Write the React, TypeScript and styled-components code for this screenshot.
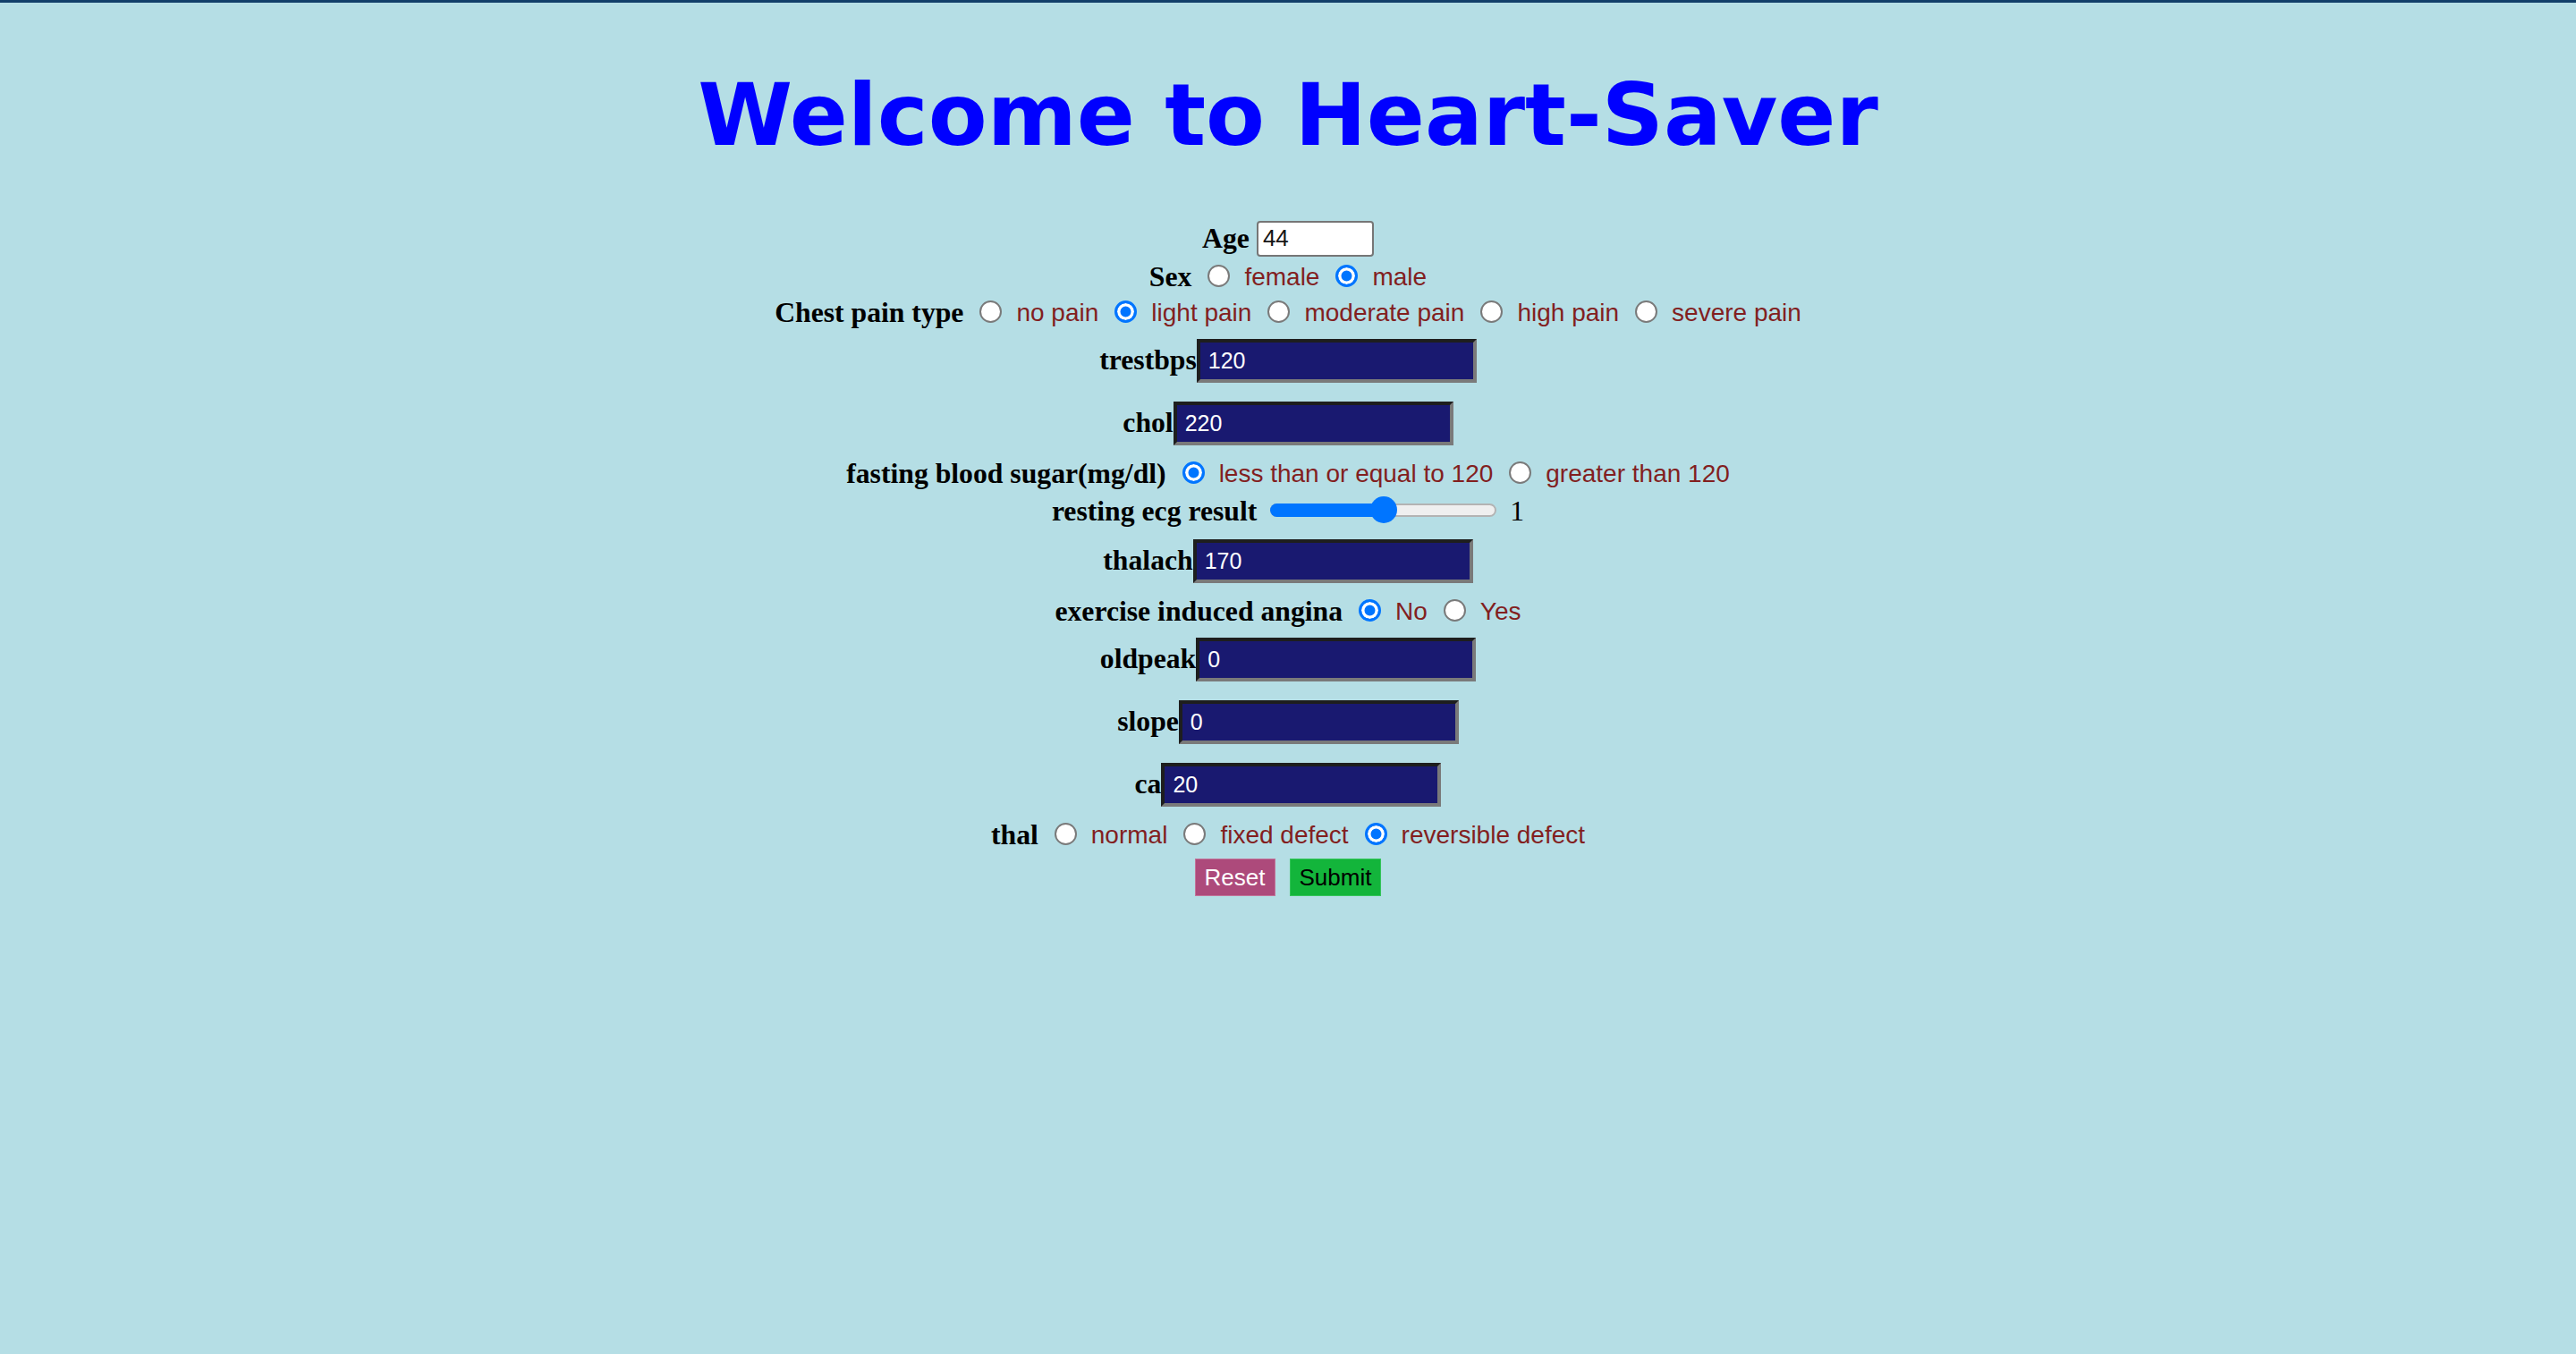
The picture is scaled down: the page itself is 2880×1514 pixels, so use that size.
import React from "react";
import styled, { createGlobalStyle } from "styled-components";

const GlobalStyle = createGlobalStyle`
  html, body {
    margin: 0;
    padding: 0;
    background: #b5dee5;
  }
  body {
    font-family: "Liberation Serif", "Times New Roman", serif;
  }
  * {
    box-sizing: border-box;
  }
`;

const Page = styled.div`
  min-height: 100vh;
  background: #b5dee5;
  border-top: 3px solid #123f6a;
`;

const Title = styled.h1`
  margin: 70px 0 0;
  font-family: "DejaVu Sans", Verdana, sans-serif;
  font-weight: 700;
  font-size: 96px;
  line-height: 112px;
  color: #0000ff;
  text-align: center;
`;

const Form = styled.form`
  display: flex;
  flex-direction: column;
  margin: 60px 0 0;
`;

const Row = styled.div<{ $h: number; $drop?: number }>`
  height: ${(p) => p.$h}px;
  padding-top: ${(p) => p.$drop ?? 0}px;
  display: flex;
  justify-content: center;
  align-items: center;
`;

const FieldLabel = styled.span<{ $gap?: number }>`
  font-family: "Liberation Serif", "Times New Roman", serif;
  font-weight: 700;
  font-size: 31.7px;
  line-height: 1;
  color: #000;
  white-space: pre;
  margin-right: ${(p) => p.$gap ?? 0}px;
`;

const Radio = styled.input.attrs({ type: "radio" })`
  appearance: none;
  -webkit-appearance: none;
  flex: none;
  width: 25px;
  height: 25px;
  margin: 0 16px 4px 18px;
  border-radius: 50%;
  border: 2px solid #7a7a7a;
  background: #fff;
  outline: none;

  &:checked {
    border: 3px solid #0075ff;
    background: #0075ff;
    box-shadow: inset 0 0 0 3.5px #fff;
  }
`;

const OptionText = styled.span`
  font-family: "Liberation Sans", Arial, sans-serif;
  font-size: 28px;
  line-height: 1;
  color: #821f1f;
  white-space: pre;
`;

const AgeInput = styled.input`
  width: 131px;
  height: 40px;
  margin: 0;
  padding: 0 5px;
  background: #fff;
  color: #151515;
  border: 2px solid #767676;
  border-radius: 4px;
  font-family: "Liberation Sans", Arial, sans-serif;
  font-size: 26px;
  outline: none;
`;

const DarkInput = styled.input`
  width: 313px;
  height: 49px;
  margin: 0;
  padding: 0 9px;
  background: #191970;
  color: #fff;
  border: 4px solid;
  border-color: #1e1e1e #7a7a7a #7a7a7a #1e1e1e;
  font-family: "Liberation Sans", Arial, sans-serif;
  font-size: 25px;
  outline: none;
`;

const SliderTrack = styled.div`
  position: relative;
  flex: none;
  width: 253px;
  height: 15px;
  margin: 0 15px 4px;
  border-radius: 8px;
  background: #efefef;
  border: 2px solid #b3b3b3;
`;

const SliderFill = styled.div`
  position: absolute;
  left: -2px;
  top: -2px;
  bottom: -2px;
  border-radius: 8px;
  background: #0075ff;
`;

const SliderThumb = styled.div`
  position: absolute;
  top: 50%;
  width: 30px;
  height: 30px;
  margin: -15px 0 0 -15px;
  border-radius: 50%;
  background: #0075ff;
`;

const ValueText = styled.span`
  font-family: "Liberation Serif", "Times New Roman", serif;
  font-size: 31.7px;
  line-height: 1;
  color: #000;
`;

const ButtonRow = styled.div`
  display: flex;
  justify-content: center;
  gap: 16px;
  margin-top: 8px;
`;

const Button = styled.button<{ $variant: "reset" | "submit" }>`
  height: 42px;
  margin: 0;
  padding: 0 10px;
  font-family: "Liberation Sans", Arial, sans-serif;
  font-size: 26px;
  line-height: 1;
  cursor: pointer;
  background: ${(p) => (p.$variant === "reset" ? "#ad4a7b" : "#13b53b")};
  color: ${(p) => (p.$variant === "reset" ? "#fff" : "#000")};
  border: 1px solid ${(p) => (p.$variant === "reset" ? "#c27399" : "#34c45a")};
`;

type RadioRowProps = {
  label: string;
  name: string;
  options: string[];
  checked: number;
};

const RadioRow = ({ label, name, options, checked }: RadioRowProps) => (
  <Row $h={40} $drop={4}>
    <FieldLabel>{label}</FieldLabel>
    {options.map((opt, i) => (
      <React.Fragment key={opt}>
        <Radio name={name} value={String(i)} defaultChecked={i === checked} />
        <OptionText>{opt}</OptionText>
      </React.Fragment>
    ))}
  </Row>
);

const TextRow = ({ label, value }: { label: string; value: string }) => (
  <Row $h={70}>
    <FieldLabel>{label}</FieldLabel>
    <DarkInput name={label} defaultValue={value} />
  </Row>
);

const SliderRow = ({ label, value, max }: { label: string; value: number; max: number }) => {
  const pct = (value / max) * 100;
  return (
    <Row $h={44} $drop={4}>
      <FieldLabel>{label}</FieldLabel>
      <SliderTrack>
        <SliderFill style={{ width: `calc(${pct}% + 2px)` }} />
        <SliderThumb style={{ left: `${pct}%` }} />
      </SliderTrack>
      <ValueText>{value}</ValueText>
    </Row>
  );
};

export default function App() {
  return (
    <>
      <GlobalStyle />
      <Page>
        <Title>Welcome to Heart-Saver</Title>
        <Form onSubmit={(e) => e.preventDefault()}>
          <Row $h={43}>
            <FieldLabel $gap={8}>Age</FieldLabel>
            <AgeInput name="age" defaultValue="44" />
          </Row>
          <RadioRow label="Sex" name="sex" options={["female", "male"]} checked={1} />
          <RadioRow
            label="Chest pain type"
            name="cp"
            options={["no pain", "light pain", "moderate pain", "high pain", "severe pain"]}
            checked={1}
          />
          <TextRow label="trestbps" value="120" />
          <TextRow label="chol" value="220" />
          <RadioRow
            label="fasting blood sugar(mg/dl)"
            name="fbs"
            options={["less than or equal to 120", "greater than 120"]}
            checked={0}
          />
          <SliderRow label="resting ecg result" value={1} max={2} />
          <TextRow label="thalach" value="170" />
          <RadioRow label="exercise induced angina" name="exang" options={["No", "Yes"]} checked={0} />
          <TextRow label="oldpeak" value="0" />
          <TextRow label="slope" value="0" />
          <TextRow label="ca" value="20" />
          <RadioRow
            label="thal"
            name="thal"
            options={["normal", "fixed defect", "reversible defect"]}
            checked={2}
          />
          <ButtonRow>
            <Button type="reset" $variant="reset">Reset</Button>
            <Button type="submit" $variant="submit">Submit</Button>
          </ButtonRow>
        </Form>
      </Page>
    </>
  );
}
